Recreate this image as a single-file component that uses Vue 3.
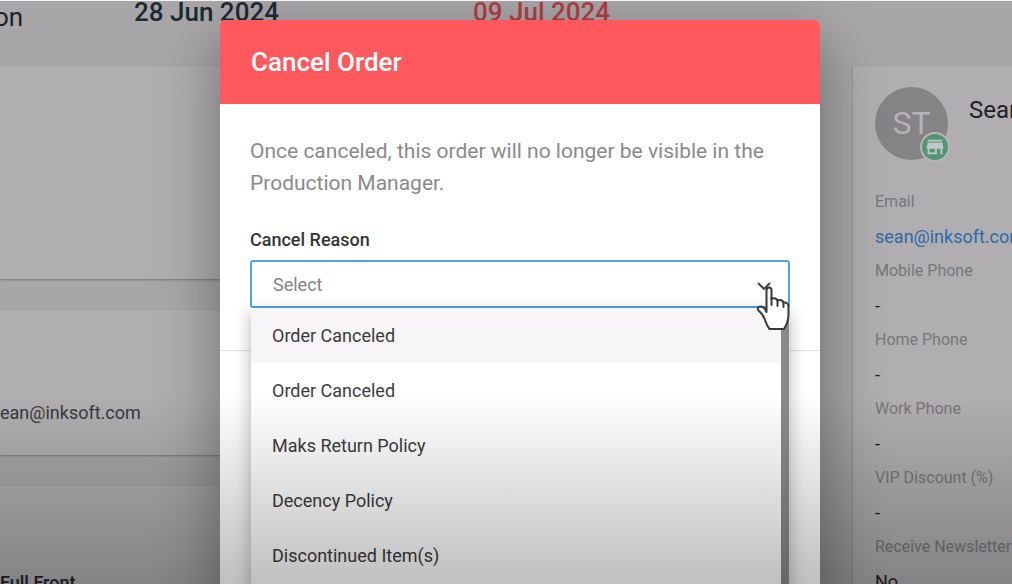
<script setup>
import { ref } from "vue"

const reason = ref("")
const highlighted = ref(0)

const reasons = [
  "Order Canceled",
  "Order Canceled",
  "Maks Return Policy",
  "Decency Policy",
  "Discontinued Item(s)",
]

const phones = [
  { label: "Mobile Phone", value: "-" },
  { label: "Home Phone", value: "-" },
  { label: "Work Phone", value: "-" },
  { label: "VIP Discount (%)", value: "-" },
  { label: "Receive Newsletters", value: "No" },
]

const selectReason = (index) => {
  highlighted.value = index
  reason.value = String(index)
}
</script>

<template>
  <div class="page">
    <!-- Order page behind the dialog -->
    <header class="order-header">
      <span class="status">on</span>
      <span class="date">28 Jun 2024</span>
      <span class="date due">09 Jul 2024</span>
    </header>

    <main class="order">
      <div class="cards">
        <section class="card tall"></section>
        <section class="card contact">ean@inksoft.com</section>
        <section class="card art">Full Front</section>
      </div>

      <aside class="card customer">
        <div class="customer-top">
          <div class="avatar">
            ST
            <span class="badge">
              <svg viewBox="0 0 24 24" width="22" height="22">
                <path
                  fill="currentColor"
                  d="M20 4H4v2h16V4zm1 10v-2l-1-5H4l-1 5v2h1v6h10v-6h4v6h2v-6h1zm-9 4H6v-4h6v4z"
                />
              </svg>
            </span>
          </div>
          <h2>Sean</h2>
        </div>
        <dl>
          <dt>Email</dt>
          <dd><a href="mailto:sean@inksoft.com">sean@inksoft.com</a></dd>
          <template v-for="item in phones" :key="item.label">
            <dt>{{ item.label }}</dt>
            <dd>{{ item.value }}</dd>
          </template>
        </dl>
      </aside>
    </main>

    <div class="overlay">
      <div class="modal" role="dialog" aria-labelledby="modal-title">
        <h1 id="modal-title">Cancel Order</h1>
        <div class="modal-body">
          <p>
            Once canceled, this order will no longer be visible in the
            Production Manager.
          </p>
          <label for="reason">Cancel Reason</label>
          <div class="dropdown">
            <select id="reason" v-model="reason">
              <option value="">Select</option>
              <option v-for="(item, index) in reasons" :key="index" :value="String(index)">
                {{ item }}
              </option>
            </select>
            <svg class="chevron" viewBox="0 0 14 8" width="14" height="8">
              <path d="M1 1l6 6 6-6" fill="none" stroke="currentColor" stroke-width="2" />
            </svg>
            <ul class="menu">
              <li v-for="(item, index) in reasons" :key="index">
                <button
                  type="button"
                  :class="{ highlight: index === highlighted }"
                  @click="selectReason(index)"
                >
                  {{ item }}
                </button>
              </li>
            </ul>
            <!-- Hand pointer -->
            <svg class="pointer" viewBox="0 0 34 45" width="34" height="45">
              <path
                d="M10.500 26V4.500Q10.500 1.500 13 1.500Q15.500 1.500 15.500 4.500V12.500Q20.500 11.500 21.500 14.500Q26 13 27.500 16.500Q32.500 16 32.500 21V29Q32 37 28 43H13.500Q11 40 9 34Q7 28 2.500 24.500Q0.500 21 4.500 20.500Q8 20.500 10.500 26Z"
                fill="#fff"
                stroke="#38383b"
                stroke-width="2"
                stroke-linejoin="round"
              />
              <path
                d="M15.500 12V19M21.500 14V20M27.500 16V21"
                fill="none"
                stroke="#38383b"
                stroke-width="2"
                stroke-linecap="round"
              />
            </svg>
          </div>
        </div>
      </div>
    </div>

    <div class="fade"></div>
  </div>
</template>

<style>
body {
  background: #a8a6a9;
}
</style>

<style scoped>
* {
  box-sizing: border-box;
}

.page {
  position: relative;
  height: 100vh;
  overflow: hidden;
  border-top: 1px solid #f4f4f4;
  background: #a8a6a9;
  font-family: Roboto, "Liberation Sans", sans-serif;
  color: #1f2127;
}

.order-header {
  display: flex;
  height: 65px;
  white-space: nowrap;
}

.status {
  width: 140px;
  margin-left: -6px;
  font-size: 26px;
  line-height: 32px;
}

.date {
  width: 339px;
  font-size: 26px;
  font-weight: 500;
  line-height: 22px;
  color: #1d2a33;
}

.due {
  color: #b03c43;
}

.order {
  display: grid;
  grid-template-columns: minmax(0, 1fr) 159px;
  gap: 40px;
}

.cards {
  display: flex;
  flex-direction: column;
  gap: 31px;
}

.card {
  background: #b0aeb1;
  box-shadow: 0 1px 2px rgba(0, 0, 0, 0.3);
}

.tall {
  height: 213px;
}

.contact {
  height: 145px;
  padding-top: 90px;
  font-size: 18px;
  line-height: 26px;
  color: #38393d;
}

.art {
  height: 160px;
  padding-top: 84px;
  font-size: 18px;
  font-weight: 500;
  line-height: 26px;
}

.customer {
  padding: 21px 0 0 22px;
  overflow: hidden;
  white-space: nowrap;
}

.customer-top {
  display: flex;
  gap: 21px;
  margin-bottom: 25px;
}

.avatar {
  position: relative;
  flex: none;
  width: 73px;
  height: 73px;
  border-radius: 50%;
  background: #858386;
  color: #b4b2b5;
  font-size: 32px;
  line-height: 73px;
  text-align: center;
}

.badge {
  position: absolute;
  right: -2px;
  bottom: -2px;
  display: flex;
  align-items: center;
  justify-content: center;
  width: 30px;
  height: 30px;
  border: 2px solid #b8b6b9;
  border-radius: 50%;
  background: #549578;
  color: #c2c8c4;
}

h2 {
  margin: 7px 0 0;
  font-size: 24px;
  font-weight: 400;
  line-height: 32px;
}

dl,
dd {
  margin: 0;
}

dt {
  font-size: 16px;
  line-height: 34px;
  color: #78767a;
}

dd {
  font-size: 18px;
  line-height: 35px;
}

dd a {
  color: #2d6aa8;
  text-decoration: none;
}

.overlay {
  position: absolute;
  inset: 0;
  display: flex;
  justify-content: center;
  padding: 19px 0 0 28px;
}

.modal {
  width: 600px;
  height: 800px;
  border-radius: 5px;
  background: #fff;
  box-shadow: 0 24px 60px 4px rgba(0, 0, 0, 0.35);
}

h1 {
  margin: 0;
  padding: 0 31px;
  border-radius: 5px 5px 0 0;
  background: #ff595e;
  color: #fff;
  font-size: 26px;
  font-weight: 500;
  line-height: 84px;
}

.modal-body {
  padding: 31px 30px 42px;
  border-bottom: 1px solid #e2e1e3;
}

p {
  margin: 0 0 29px;
  font-size: 21px;
  line-height: 32px;
  color: #8b898d;
}

label {
  display: block;
  margin-bottom: 8px;
  font-size: 18px;
  font-weight: 500;
  line-height: 24px;
  color: #343438;
}

.dropdown {
  position: relative;
}

select {
  display: block;
  width: 100%;
  height: 48px;
  padding: 0 21px;
  border: 2px solid #4da3e6;
  border-radius: 3px;
  outline: none;
  appearance: none;
  background: #fff;
  color: #858387;
  font-family: inherit;
  font-size: 18px;
}

.chevron {
  position: absolute;
  top: 22px;
  right: 19px;
  color: #444;
}

.menu {
  position: absolute;
  top: 48px;
  left: 1px;
  right: 1px;
  height: 400px;
  margin: 0;
  padding: 0;
  list-style: none;
  border-right: 8px solid #8a898c;
  background: #fff;
  box-shadow: 0 6px 16px rgba(40, 30, 50, 0.35);
}

.menu button {
  display: block;
  width: 100%;
  height: 55px;
  padding: 0 21px;
  border: 0;
  background: #fff;
  color: #3c3b40;
  font-family: inherit;
  font-size: 18px;
  text-align: left;
}

.menu .highlight {
  background: #f7f5f8;
}

.pointer {
  position: absolute;
  top: 26px;
  right: 0;
}

/* Darkens the lower part of the window */
.fade {
  position: absolute;
  right: 0;
  bottom: 0;
  left: 0;
  height: 190px;
  background: linear-gradient(rgba(0, 0, 0, 0), rgba(0, 0, 0, 0.25));
  pointer-events: none;
}
</style>
